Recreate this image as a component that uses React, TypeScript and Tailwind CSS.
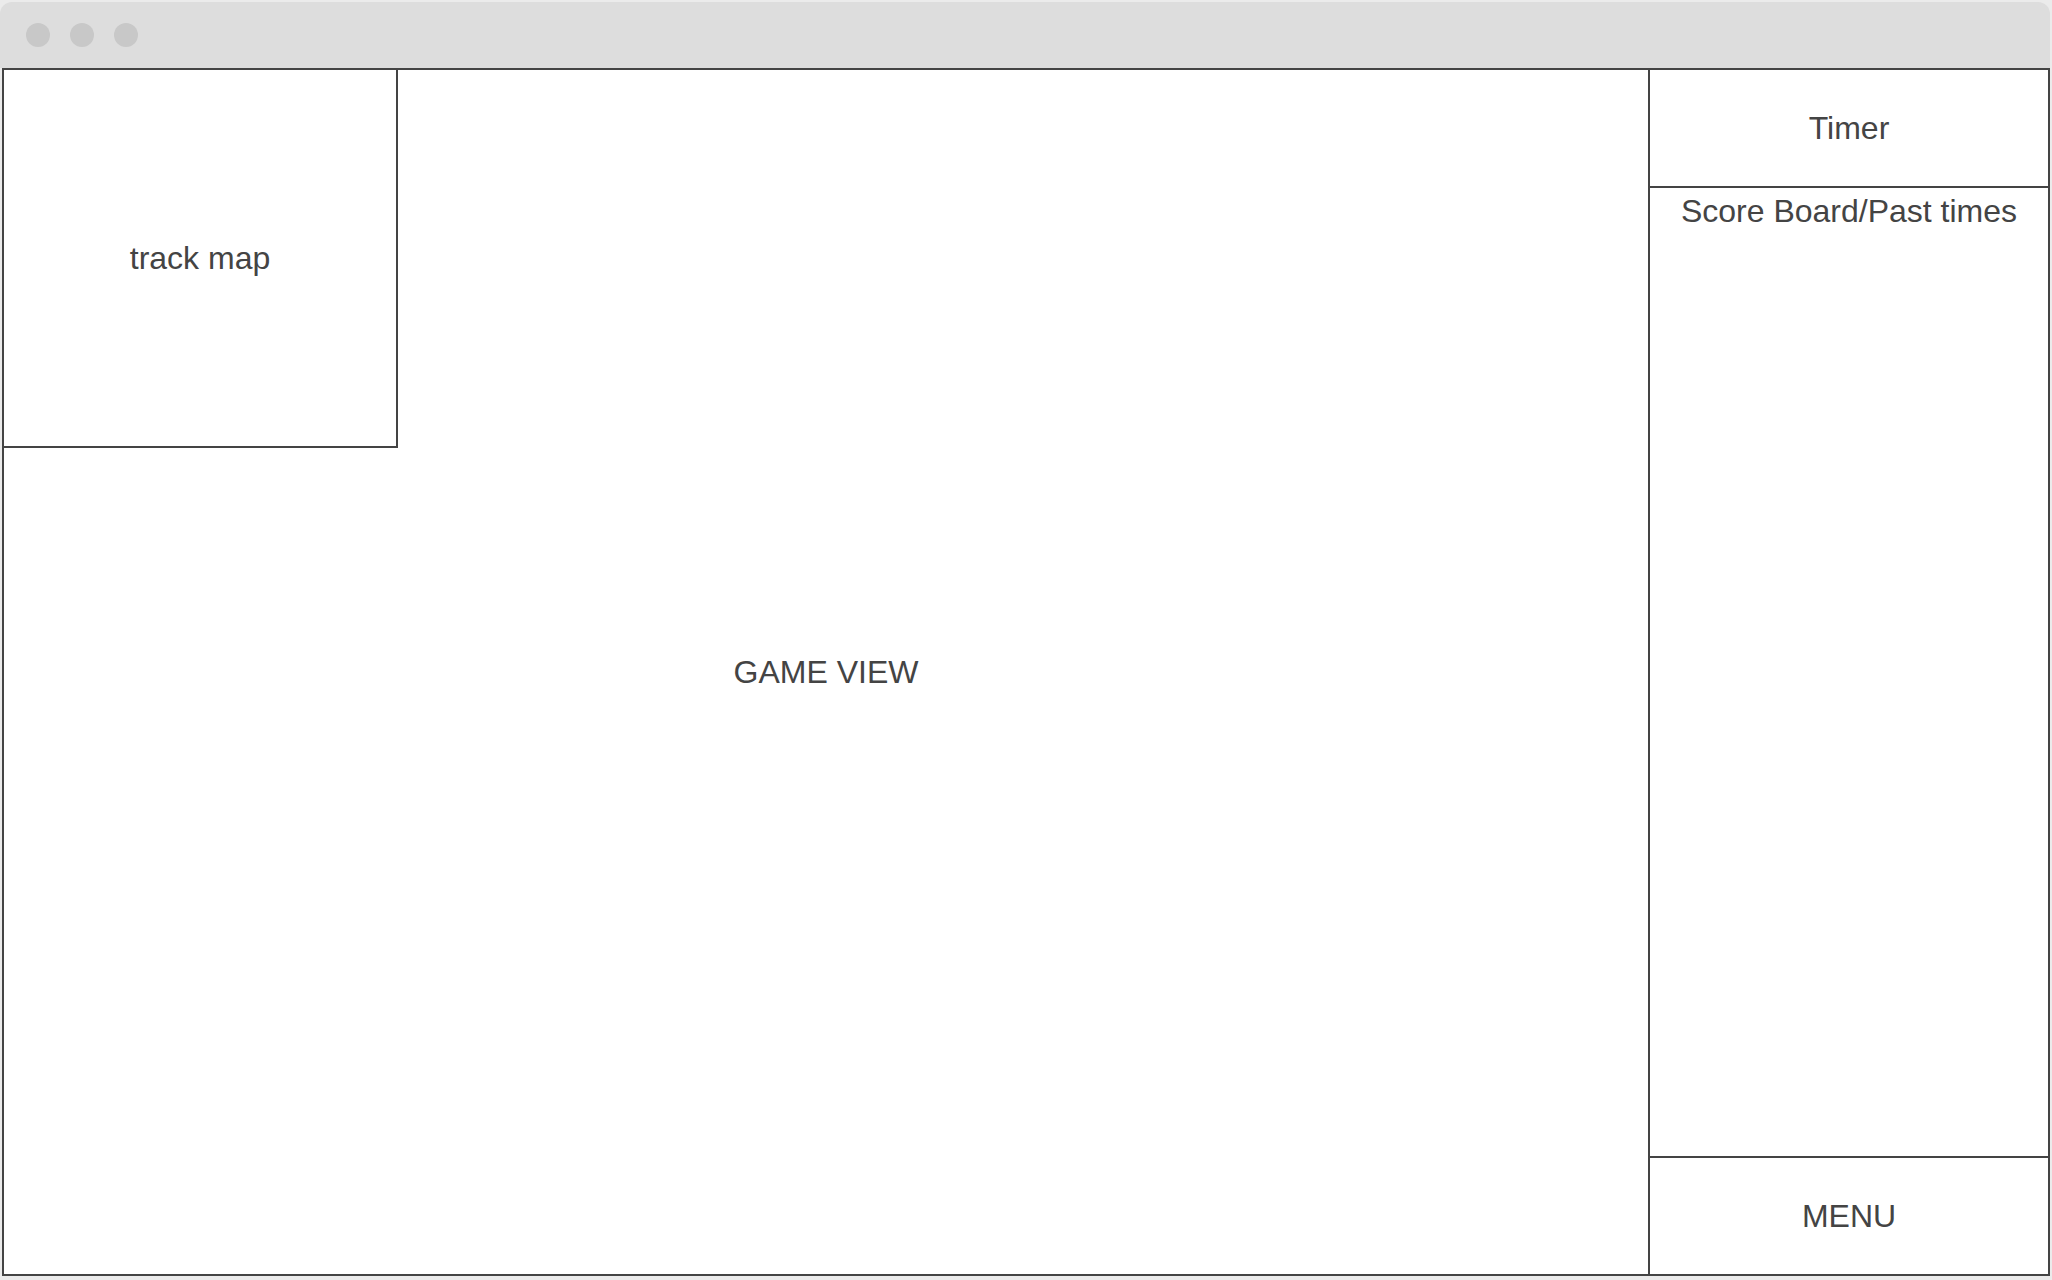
export default function App() {
  return (
    <div className="w-full h-screen bg-[#ebebeb] pt-[2px] pb-[4px] pr-[2px] flex flex-col font-['Liberation_Sans',Arial,sans-serif] text-[#444444]">
      <div className="h-[66px] shrink-0 bg-[#dddddd] rounded-t-[12px] flex items-center gap-[20px] pl-[26px]">
        <span className="w-[24px] h-[24px] rounded-full bg-[#c8c8c8]" />
        <span className="w-[24px] h-[24px] rounded-full bg-[#c8c8c8]" />
        <span className="w-[24px] h-[24px] rounded-full bg-[#c8c8c8]" />
      </div>
      <div className="flex-1 min-h-0 ml-[2px] border-2 border-[#444444] bg-white flex">
        <div className="relative flex-1 flex items-center justify-center">
          <span className="text-[32px] leading-[37px]">GAME VIEW</span>
          <div className="absolute top-0 left-0 w-[394px] h-[378px] border-r-2 border-b-2 border-[#444444] flex items-center justify-center">
            <span className="text-[32px] leading-[37px]">track map</span>
          </div>
        </div>
        <div className="w-[400px] shrink-0 border-l-2 border-[#444444] flex flex-col">
          <div className="h-[118px] border-b-2 border-[#444444] flex items-center justify-center">
            <span className="text-[32px] leading-[37px]">Timer</span>
          </div>
          <div className="flex-1 pt-[5px] text-center">
            <span className="text-[32px] leading-[37px]">Score Board/Past times</span>
          </div>
          <div className="h-[118px] border-t-2 border-[#444444] flex items-center justify-center">
            <span className="text-[32px] leading-[37px]">MENU</span>
          </div>
        </div>
      </div>
    </div>
  );
}
